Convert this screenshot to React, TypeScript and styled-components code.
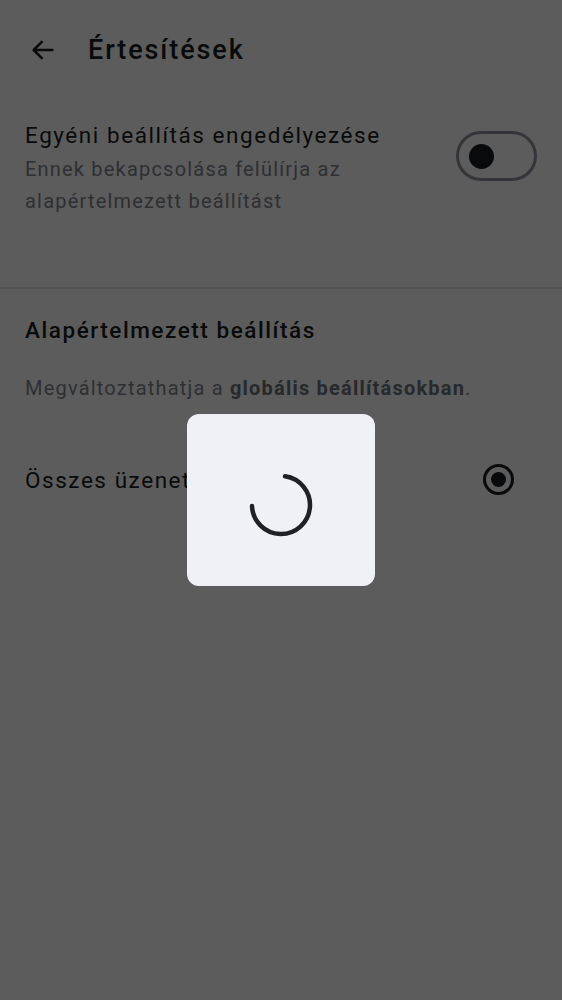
import React from "react";
import styled, { createGlobalStyle } from "styled-components";

const Global = createGlobalStyle`
  html, body { margin: 0; padding: 0; background: #ffffff; }
  body { font-family: Roboto, "Noto Sans", sans-serif; }
`;

const Page = styled.div`
  position: relative;
  width: 562px;
  height: 1000px;
  background: #ffffff;
  overflow: hidden;
`;

const Header = styled.header`
  display: flex;
  align-items: center;
  height: 100px;
  padding-left: 29px;
  gap: 31px;
`;

const Title = styled.h1`
  margin: 0;
  font-size: 27px;
  font-weight: 500;
  letter-spacing: 1.9px;
  color: #1a1c21;
`;

const Section = styled.section<{ $divider?: boolean }>`
  padding: 0 25px;
  border-bottom: ${(p) => (p.$divider ? "2px solid #e6e7eb" : "none")};
`;

const SwitchRow = styled.div`
  display: flex;
  align-items: flex-start;
  justify-content: space-between;
  padding-top: 20px;
  height: 187px;
  box-sizing: border-box;
`;

const TextCol = styled.div`
  display: flex;
  flex-direction: column;
`;

const RowTitle = styled.div`
  font-size: 22.5px;
  line-height: 30px;
  letter-spacing: 1.55px;
  white-space: nowrap;
  color: #1a1c21;
`;

const RowSub = styled.div`
  margin-top: 3px;
  font-size: 20px;
  line-height: 32px;
  letter-spacing: 1.2px;
  color: #80848c;
  max-width: 380px;
`;

const Toggle = styled.div`
  margin-top: 11px;
  width: 81px;
  height: 50px;
  flex-shrink: 0;
  box-sizing: border-box;
  border: 3px solid #8e939c;
  border-radius: 25px;
  display: flex;
  align-items: center;
  padding-left: 10px;
`;

const Knob = styled.div`
  width: 25px;
  height: 25px;
  border-radius: 50%;
  background: #1a1c21;
`;

const SectionHeading = styled.h2`
  margin: 0;
  padding-top: 26px;
  font-size: 22.5px;
  font-weight: 500;
  line-height: 30px;
  letter-spacing: 1.55px;
  color: #1a1c21;
`;

const Info = styled.p`
  margin: 28px 0 0;
  font-size: 20px;
  line-height: 30px;
  letter-spacing: 1.2px;
  color: #80848c;
  b { font-weight: 700; color: #6e727a; }
`;

const OptionRow = styled.div`
  display: flex;
  align-items: center;
  justify-content: space-between;
  margin-top: 61px;
  padding-right: 23px;
`;

const OptionLabel = styled.span`
  font-size: 22.5px;
  letter-spacing: 1.55px;
  color: #1a1c21;
`;

const Radio = styled.div`
  width: 31px;
  height: 31px;
  box-sizing: border-box;
  border: 3px solid #1a1c21;
  border-radius: 50%;
  display: flex;
  align-items: center;
  justify-content: center;
`;

const RadioDot = styled.div`
  width: 15px;
  height: 15px;
  border-radius: 50%;
  background: #1a1c21;
`;

const Overlay = styled.div`
  position: absolute;
  inset: 0;
  background: rgba(0, 0, 0, 0.64);
  display: flex;
  justify-content: center;
  align-items: flex-start;
  padding-top: 414px;
`;

const LoaderBox = styled.div`
  width: 188px;
  height: 172px;
  border-radius: 12px;
  background: #f0f1f5;
  display: flex;
  align-items: center;
  justify-content: center;
`;

const SpinnerSvg = styled.svg`
  margin-top: 10px;
`;

const BackIcon = () => (
  <svg width="28" height="28" viewBox="0 0 24 24" fill="none">
    <path d="M20 12H4.5M11 5l-7 7 7 7" stroke="#1a1c21" strokeWidth="2.2" strokeLinecap="round" strokeLinejoin="round" />
  </svg>
);

const Spinner = () => {
  const r = 29;
  const cx = 34;
  const cy = 34;
  const a0 = (-82 * Math.PI) / 180;
  const a1 = (178 * Math.PI) / 180;
  const x0 = cx + r * Math.cos(a0);
  const y0 = cy + r * Math.sin(a0);
  const x1 = cx + r * Math.cos(a1);
  const y1 = cy + r * Math.sin(a1);
  return (
    <SpinnerSvg width="68" height="68" viewBox="0 0 68 68">
      <path
        d={`M${x0} ${y0} A${r} ${r} 0 1 1 ${x1} ${y1}`}
        stroke="#1f2126"
        strokeWidth="4.5"
        fill="none"
        strokeLinecap="round"
      />
    </SpinnerSvg>
  );
};

export default function App() {
  return (
    <Page>
      <Global />
      <Header>
        <BackIcon />
        <Title>Értesítések</Title>
      </Header>
      <Section $divider>
        <SwitchRow>
          <TextCol>
            <RowTitle>Egyéni beállítás engedélyezése</RowTitle>
            <RowSub>Ennek bekapcsolása felülírja az alapértelmezett beállítást</RowSub>
          </TextCol>
          <Toggle>
            <Knob />
          </Toggle>
        </SwitchRow>
      </Section>
      <Section>
        <SectionHeading>Alapértelmezett beállítás</SectionHeading>
        <Info>
          Megváltoztathatja a <b>globális beállításokban</b>.
        </Info>
        <OptionRow>
          <OptionLabel>Összes üzenet</OptionLabel>
          <Radio>
            <RadioDot />
          </Radio>
        </OptionRow>
      </Section>
      <Overlay>
        <LoaderBox>
          <Spinner />
        </LoaderBox>
      </Overlay>
    </Page>
  );
}
